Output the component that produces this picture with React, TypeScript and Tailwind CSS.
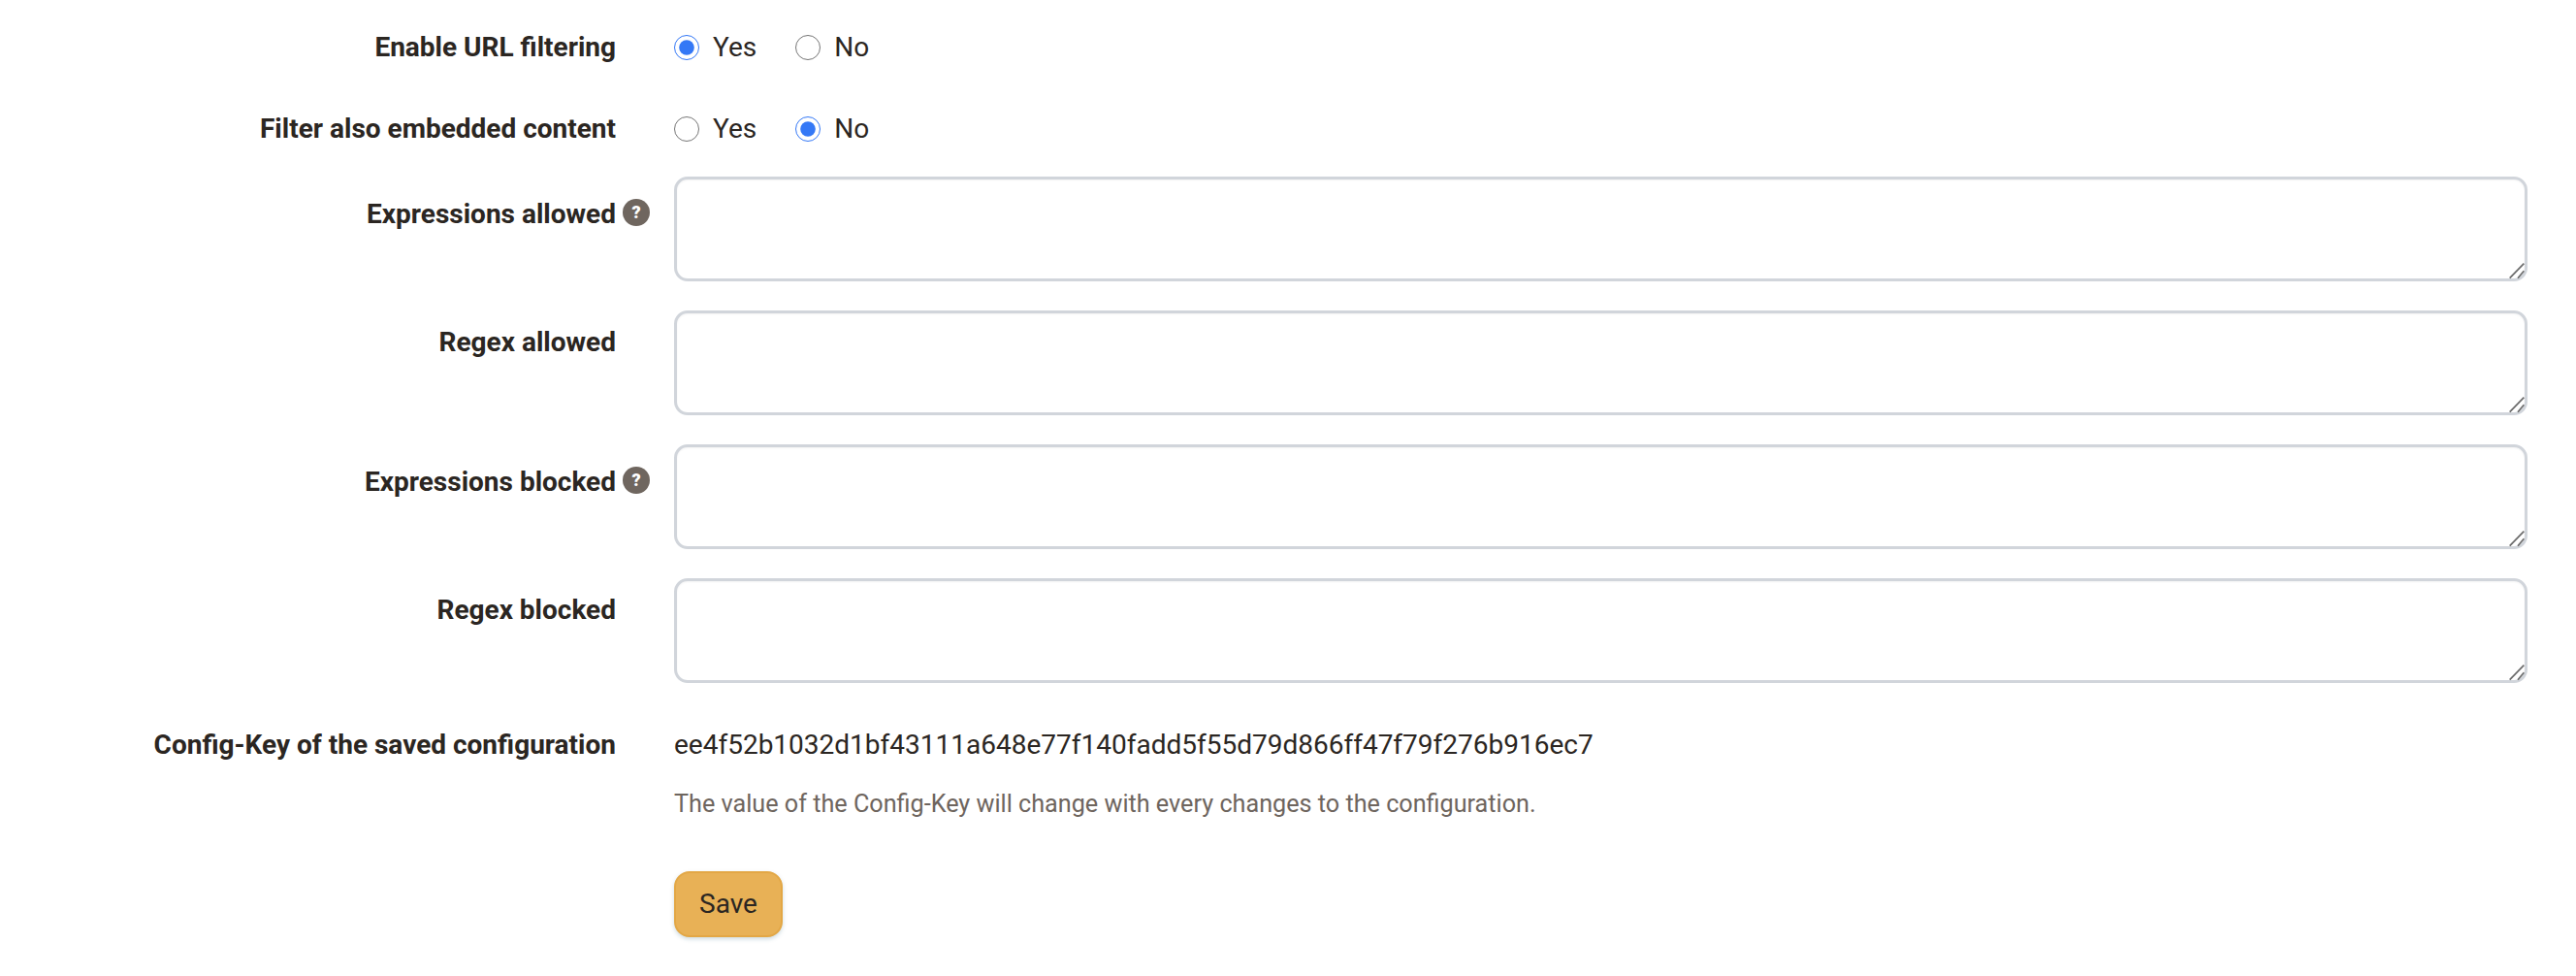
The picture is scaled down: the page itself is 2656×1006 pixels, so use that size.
function Label({ text, help, className }: { text: string; help?: boolean; className?: string }) {
  return (
    <div className={`relative w-[635px] shrink-0 text-right font-bold ${className ?? ""}`}>
      {text}
      {help && (
        <span className="absolute left-[642px] top-[23px] flex h-[28px] w-[28px] items-center justify-center rounded-full bg-[#6f665f] text-[18px] leading-none font-black text-white">
          ?
        </span>
      )}
    </div>
  );
}

function Radio({ name, label, checked }: { name: string; label: string; checked?: boolean }) {
  return (
    <label className="flex items-center gap-[14px]">
      <input type="radio" name={name} defaultChecked={checked} className="m-0 h-[26px] w-[26px] accent-[#3478f6]" />
      {label}
    </label>
  );
}

function RadioRow({ label, name, value }: { label: string; name: string; value: string }) {
  return (
    <div className="flex h-[84px] items-center gap-[60px]">
      <Label text={label} />
      <div className="flex gap-[40px]">
        <Radio name={name} label="Yes" checked={value === "yes"} />
        <Radio name={name} label="No" checked={value === "no"} />
      </div>
    </div>
  );
}

function TextRow({ label, help }: { label: string; help?: boolean }) {
  return (
    <div className="mb-[30px] flex gap-[60px]">
      <Label text={label} help={help} className={help ? "pt-[19px]" : "pt-[13px]"} />
      <div className="relative flex">
        <textarea className="h-[108px] w-[1911px] resize-none rounded-[14px] border-[3px] border-[#d1d5db] bg-white shadow-[inset_0_1px_2px_rgba(0,0,0,0.05)]" />
        {/* resize grip */}
        <svg className="absolute bottom-[2px] right-[3px] h-[18px] w-[18px]" viewBox="0 0 18 18" fill="none" stroke="#6b6b6b" strokeWidth="1.7">
          <path d="M2.7 16.7 L17.3 1.7" />
          <path d="M11 16.7 L17.3 9.3" />
        </svg>
      </div>
    </div>
  );
}

export default function App() {
  return (
    <div className="h-[1006px] w-[2656px] overflow-hidden bg-white pt-[7px] font-['Roboto',sans-serif] text-[28px] leading-[40px] text-[#2b2622]">
      <RadioRow label="Enable URL filtering" name="url" value="yes" />
      <RadioRow label="Filter also embedded content" name="embedded" value="no" />
      <div className="pt-[7px]">
        <TextRow label="Expressions allowed" help />
        <TextRow label="Regex allowed" />
        <TextRow label="Expressions blocked" help />
        <TextRow label="Regex blocked" />
      </div>
      <div className="flex gap-[60px] pt-[14px]">
        <Label text="Config-Key of the saved configuration" />
        <div>
          <div>ee4f52b1032d1bf43111a648e77f140fadd5f55d79d866ff47f79f276b916ec7</div>
          <div className="mt-[23px] text-[25.2px] leading-[36px] text-[#6e655e]">
            The value of the Config-Key will change with every changes to the configuration.
          </div>
          <button className="mt-[51px] h-[68px] w-[112px] rounded-[16px] border-2 border-[#e3a745] bg-[#e8b156] shadow-[0_2px_4px_rgba(60,110,130,0.25)]">
            Save
          </button>
        </div>
      </div>
    </div>
  );
}
